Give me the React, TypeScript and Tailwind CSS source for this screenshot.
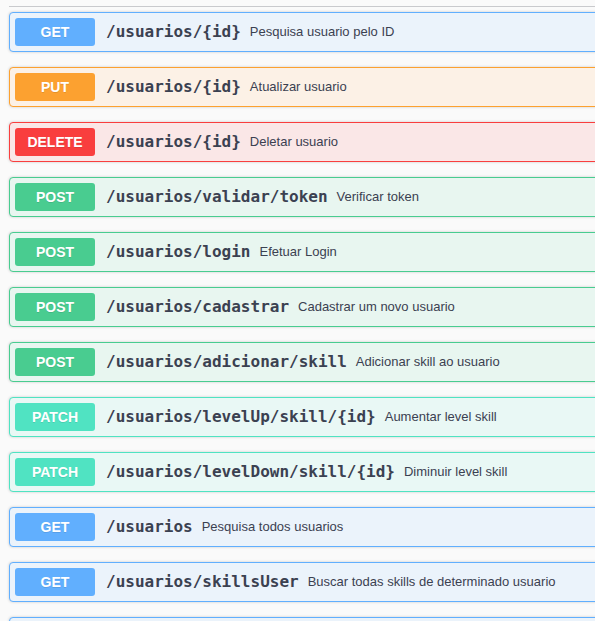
import React from 'react';

type Method = 'GET' | 'PUT' | 'DELETE' | 'POST' | 'PATCH';

interface Endpoint {
  method: Method;
  path: string;
  summary: string;
}

const styles: Record<Method, { block: string; badge: string }> = {
  GET: { block: 'border-[#61affe] bg-[#ebf3fb]', badge: 'bg-[#61affe]' },
  PUT: { block: 'border-[#fca130] bg-[#fcf1e6]', badge: 'bg-[#fca130]' },
  DELETE: { block: 'border-[#f93e3e] bg-[#fae7e7]', badge: 'bg-[#f93e3e]' },
  POST: { block: 'border-[#49cc90] bg-[#e8f6f0]', badge: 'bg-[#49cc90]' },
  PATCH: { block: 'border-[#50e3c2] bg-[#e9f8f5]', badge: 'bg-[#50e3c2]' },
};

const endpoints: Endpoint[] = [
  { method: 'GET', path: '/usuarios/{id}', summary: 'Pesquisa usuario pelo ID' },
  { method: 'PUT', path: '/usuarios/{id}', summary: 'Atualizar usuario' },
  { method: 'DELETE', path: '/usuarios/{id}', summary: 'Deletar usuario' },
  { method: 'POST', path: '/usuarios/validar/token', summary: 'Verificar token' },
  { method: 'POST', path: '/usuarios/login', summary: 'Efetuar Login' },
  { method: 'POST', path: '/usuarios/cadastrar', summary: 'Cadastrar um novo usuario' },
  { method: 'POST', path: '/usuarios/adicionar/skill', summary: 'Adicionar skill ao usuario' },
  { method: 'PATCH', path: '/usuarios/levelUp/skill/{id}', summary: 'Aumentar level skill' },
  { method: 'PATCH', path: '/usuarios/levelDown/skill/{id}', summary: 'Diminuir level skill' },
  { method: 'GET', path: '/usuarios', summary: 'Pesquisa todos usuarios' },
  { method: 'GET', path: '/usuarios/skillsUser', summary: 'Buscar todas skills de determinado usuario' },
];

function Opblock({ endpoint }: { endpoint: Endpoint }) {
  const s = styles[endpoint.method];
  return (
    <div className={`mb-[15px] rounded-[4px] border shadow-[0_0_3px_rgba(0,0,0,0.19)] ${s.block}`}>
      <div className="flex items-center p-[5px]">
        <span
          className={`w-[80px] shrink-0 rounded-[3px] py-[6px] text-center text-[14px] font-bold leading-4 text-white [text-shadow:0_1px_0_rgba(0,0,0,0.1)] ${s.badge}`}
          style={{ fontFamily: '"Liberation Sans", Arial, sans-serif' }}
        >
          {endpoint.method}
        </span>
        <span
          className="pl-[11px] pr-[9px] text-[16px] font-bold text-[#3b4151]"
          style={{ fontFamily: '"DejaVu Sans Mono", monospace' }}
        >
          {endpoint.path}
        </span>
        <span
          className="text-[13px] text-[#3b4151]"
          style={{ fontFamily: '"Liberation Sans", Arial, sans-serif' }}
        >
          {endpoint.summary}
        </span>
      </div>
    </div>
  );
}

export default function App() {
  return (
    <div className="h-[621px] w-[595px] overflow-hidden bg-[#fafafa]">
      <div className="w-[640px] pl-[9px] pt-[6px]">
        {/* Tag header divider */}
        <div className="mb-[5px] h-px bg-[#c9cacd]" />
        {endpoints.map((e, i) => (
          <Opblock key={i} endpoint={e} />
        ))}
        {/* next block, cut off by the viewport */}
        <div className="h-[40px] rounded-[4px] border border-[#61affe] bg-[#ebf3fb] shadow-[0_0_3px_rgba(0,0,0,0.19)]" />
      </div>
    </div>
  );
}
